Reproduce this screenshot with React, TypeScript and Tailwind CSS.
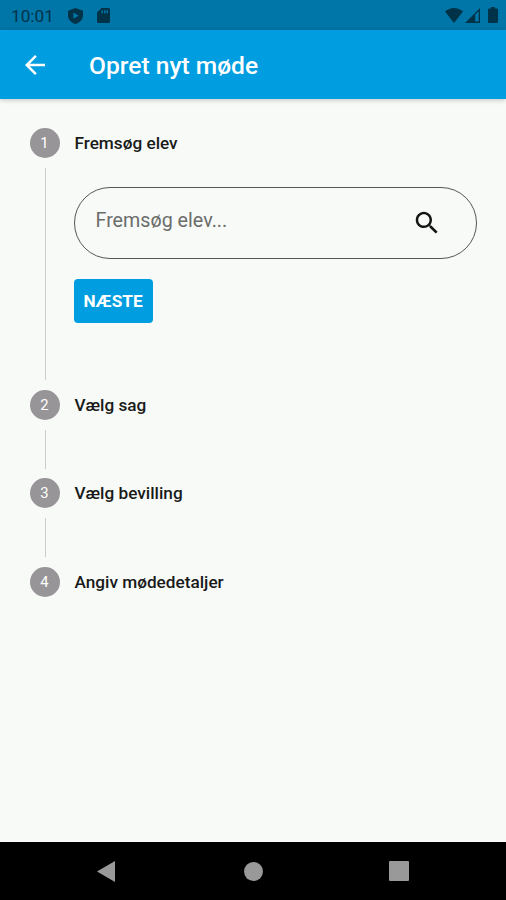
import { useState } from "react";

interface StepProps {
  number: number;
  title: string;
}

const steps: StepProps[] = [
  { number: 1, title: "Fremsøg elev" },
  { number: 2, title: "Vælg sag" },
  { number: 3, title: "Vælg bevilling" },
  { number: 4, title: "Angiv mødedetaljer" },
];

function StatusBar() {
  return (
    <div className="flex h-[30px] items-center bg-[#0076a8] pl-[11px] pr-[8px] text-[#003248]">
      <span className="w-[57px] pt-[3px] text-[17.200px] leading-none">10:01</span>
      <svg className="mt-px h-[16px] w-[15px]" viewBox="0 0 14 16" fill="currentColor" preserveAspectRatio="none">
        <path fillRule="evenodd" d="M7 0 14 2.800V7.500C14 11.500 11 14.800 7 16 3 14.800 0 11.500 0 7.500V2.800ZM5 4.600v6.200l5-3.100Z" />
      </svg>
      <svg className="ml-[14px] mt-px h-[15px] w-[13px]" viewBox="0 0 13 15" fill="currentColor">
        <path fillRule="evenodd" d="M4.500 0H11.500Q13 0 13 1.500V13.500Q13 15 11.500 15H1.500Q0 15 0 13.500V4.500ZM4.500 2.300V5.300H6V2.300ZM7 2.300V5.300H8.500V2.300ZM9.500 2.300V5.300H11V2.300Z" />
      </svg>
      <svg className="ml-auto h-[15px] w-[18px]" viewBox="0 0 18 15" fill="currentColor">
        <path d="M9 15 0 3.600C5-1.200 13-1.200 18 3.600Z" />
      </svg>
      <svg className="ml-[2px] h-[15px] w-[15px]" viewBox="0 0 15 15" fill="currentColor">
        <path fillRule="evenodd" d="M0 15 15 0V15ZM10.200 6.600V13.600H13.700V3.200Z" />
      </svg>
      <svg className="ml-[8px] h-[16px] w-[10px]" viewBox="0 0 10 16" fill="currentColor">
        <path d="M3 0H7V1.600H9Q10 1.600 10 2.600V15Q10 16 9 16H1Q0 16 0 15V2.600Q0 1.600 1 1.600H3Z" />
      </svg>
    </div>
  );
}

function AppBar() {
  return (
    <header className="z-10 flex h-[69px] items-center bg-[#009de0] pl-[20px] text-white shadow-[0_1px_5px_rgba(0,0,0,0.22)]">
      <button aria-label="Tilbage">
        <svg className="h-[30px] w-[30px]" viewBox="0 0 24 24" fill="currentColor">
          <path d="M20 11H7.830l5.590-5.590L12 4l-8 8 8 8 1.410-1.410L7.830 13H20v-2z" />
        </svg>
      </button>
      <h1 className="ml-[39px] pt-[4px] text-[24.600px] font-medium leading-none">Opret nyt møde</h1>
    </header>
  );
}

function StepHeader({ number, title }: StepProps) {
  return (
    <div className="flex h-[30px] items-center">
      <span className="flex h-[30px] w-[30px] items-center justify-center rounded-full bg-[#979597] pt-px text-[14.800px] leading-none text-white">
        {number}
      </span>
      <span className="ml-[15px] pt-[2px] text-[17.200px] font-medium leading-none text-[#191a19]">{title}</span>
    </div>
  );
}

export default function App() {
  const [query, setQuery] = useState("");

  return (
    <div className="flex h-[900px] w-[506px] flex-col overflow-hidden bg-[#f8faf8] font-['Roboto',sans-serif]">
      <StatusBar />
      <AppBar />

      <main className="flex-1 px-[29.500px] pt-[29px]">
        <StepHeader {...steps[0]} />
        {/* Content of the active step */}
        <div className="flex h-[231.500px] pt-[10px]">
          <div className="ml-[15px] h-[212px] w-px bg-[#cbcccb]" />
          <div className="ml-[28.500px] flex-1 pt-[19px]">
            <div className="flex h-[72px] w-[403px] items-center rounded-full border border-[#555655] pl-[21px] pr-[34px]">
              <input
                value={query}
                onChange={(e) => setQuery(e.target.value)}
                placeholder="Fremsøg elev..."
                className="mb-[5px] min-w-0 flex-1 text-[19.700px] outline-none placeholder:text-[#6b6d6b]"
              />
              <svg className="h-[30px] w-[30px] text-[#141514]" viewBox="0 0 24 24" fill="currentColor">
                <path d="M15.500 14h-.790l-.280-.270C15.410 12.590 16 11.110 16 9.500 16 5.910 13.090 3 9.500 3S3 5.910 3 9.500 5.910 16 9.500 16c1.610 0 3.090-.590 4.230-1.570l.270.280v.790l5 4.990L20.490 19l-4.990-5zm-6 0C7.010 14 5 11.990 5 9.500S7.010 5 9.500 5 14 7.010 14 9.500 11.990 14 9.500 14z" />
              </svg>
            </div>
            <button className="mt-[20px] flex h-[44px] w-[79px] items-center justify-center rounded-[4px] bg-[#009de0] pt-[2px] text-[17.200px] font-bold text-white">
              NÆSTE
            </button>
          </div>
        </div>

        {steps.slice(1).map((step, i) => (
          <div key={step.number}>
            {i > 0 && (
              <div className="h-[58.500px] pl-[15px] pt-[10px]">
                <div className="h-[39px] w-px bg-[#cbcccb]" />
              </div>
            )}
            <StepHeader {...step} />
          </div>
        ))}
      </main>

      <nav className="flex h-[58px] items-center bg-black pl-[97px] text-[#999]">
        <svg className="h-[21px] w-[18px]" viewBox="0 0 18 21" fill="currentColor">
          <path d="M18 0V21L0 10.500Z" />
        </svg>
        <div className="ml-[129px] h-[19px] w-[19px] rounded-full bg-[#999]" />
        <div className="ml-[126px] h-[20px] w-[20px] rounded-[1px] bg-[#999]" />
      </nav>
    </div>
  );
}
